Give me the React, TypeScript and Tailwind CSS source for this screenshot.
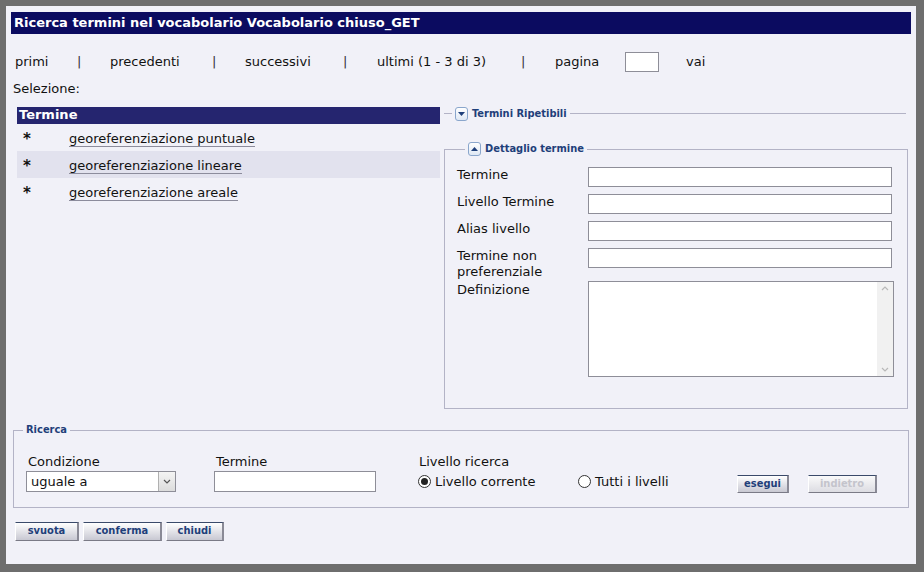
import React from 'react';

const font = { fontFamily: '"DejaVu Sans", Verdana, sans-serif' };
const narrow = { fontFamily: '"DejaVu Sans Condensed", "DejaVu Sans", sans-serif' };

const Legend: React.FC<{ label: string; open?: boolean }> = ({ label, open }) => (
    <legend className="ml-[8px] px-[3px] flex items-center gap-[4px]">
        <span className="w-[13px] h-[14px] rounded-[3px] border border-[#8aa6cc] bg-gradient-to-b from-white to-[#dfe8f4] flex items-center justify-center">
            <svg width="7" height="4" viewBox="0 0 7 4">
                {open ? <path d="M0 4 L3.5 0 L7 4 Z" fill="#1f3f7a" /> : <path d="M0 0 L7 0 L3.5 4 Z" fill="#1f3f7a" />}
            </svg>
        </span>
        <span className="text-[11px] font-bold text-[#1f3f7a]" style={narrow}>{label}</span>
    </legend>
);

const Btn: React.FC<{ label: string; w: string; h?: string; disabled?: boolean }> = ({ label, w, h = 'h-[18px]', disabled }) => (
    <div
        style={narrow}
        className={`${w} ${h} flex items-center justify-center text-[11px] font-bold border-t border-t-[#3a4a6a] border-l border-l-white border-r-2 border-r-[#8a8a96] border-b border-b-[#7a7a86] bg-gradient-to-b ${disabled ? 'text-[#c4c4cc] from-[#fafafa] to-[#dcdce2]' : 'text-[#1f3f7a] from-white to-[#c8c8d2]'}`}
    >
        {label}
    </div>
);

const Radio: React.FC<{ checked?: boolean }> = ({ checked }) => (
    <span className="w-[13px] h-[13px] rounded-full border border-[#333] bg-white flex items-center justify-center">
        {checked && <span className="w-[7px] h-[7px] rounded-full bg-[#222]" />}
    </span>
);

const terms = ['georeferenziazione puntuale', 'georeferenziazione lineare', 'georeferenziazione areale'];

const fields = ['Termine', 'Livello Termine', 'Alias livello'];

export default function App() {
    return (
        <div className="w-[924px] h-[572px] bg-[#6e6e6e] pt-[6px] pl-[6px] overflow-hidden" style={font}>
            <div className="w-[910px] h-[558px] bg-[#f1f1f8] text-[13px] text-[#111] flex flex-col">
                {/* title */}
                <div className="mt-[6px] ml-[5px] w-[900px] h-[22px] bg-[#0b0b60] text-white font-bold text-[13px] flex items-center pl-[3px]">
                    Ricerca termini nel vocabolario Vocabolario chiuso_GET
                </div>

                {/* paging */}
                <div className="mt-[18px] ml-[9px] h-[20px] flex items-center">
                    <span className="w-[62px]">primi</span>
                    <span className="w-[33px] text-[#333]">|</span>
                    <span className="w-[102px]">precedenti</span>
                    <span className="w-[33px] text-[#333]">|</span>
                    <span className="w-[98px]">successivi</span>
                    <span className="w-[34px] text-[#333]">|</span>
                    <span className="w-[144px]">ultimi (1 - 3 di 3)</span>
                    <span className="w-[34px] text-[#333]">|</span>
                    <span className="w-[70px]">pagina</span>
                    <span className="w-[34px] h-[20px] bg-white border border-[#8e8e98]" />
                    <span className="ml-[27px]">vai</span>
                </div>

                <div className="mt-[7px] ml-[7px]">Selezione:</div>

                <div className="mt-[8px] flex">
                    {/* left list */}
                    <div className="ml-[11px] w-[423px]">
                        <div className="h-[17px] bg-[#25256f] text-white font-bold text-[13px] flex items-center pl-[2px]">Termine</div>
                        {terms.map((t, i) => (
                            <div key={t} className={`h-[27px] pt-[4px] flex items-center ${i === 1 ? 'bg-[#e2e2ee]' : ''}`}>
                                <span className="w-[52px] pl-[6px] font-bold text-[15px]">*</span>
                                <span className="border-b border-[#8c8c9c] leading-[15px]">{t}</span>
                            </div>
                        ))}
                    </div>

                    {/* right */}
                    <div className="ml-[4px] w-[462px]">
                        <fieldset className="border-t border-[#b3b3c6] mt-[-1px]">
                            <Legend label="Termini Ripetibili" />
                        </fieldset>
                        <fieldset className="mt-[19px] h-[268px] border border-[#b3b3c6] pl-[12px] pr-[13px]">
                            <Legend label="Dettaglio termine" open />
                            <div className="flex flex-col mt-[9px]">
                                {fields.map((f) => (
                                    <div key={f} className="flex items-start h-[27px]">
                                        <span className="w-[131px] leading-[16px]">{f}</span>
                                        <span className="w-[304px] h-[20px] bg-white border border-[#8e8e98]" />
                                    </div>
                                ))}
                                <div className="flex items-start h-[33px]">
                                    <span className="w-[131px] leading-[16px]">Termine non<br />preferenziale</span>
                                    <span className="w-[304px] h-[20px] bg-white border border-[#8e8e98]" />
                                </div>
                                <div className="flex items-start">
                                    <span className="w-[131px] leading-[16px] pt-[1px]">Definizione</span>
                                    <div className="w-[306px] h-[96px] bg-white border border-[#8e8e98] flex justify-end">
                                        <div className="w-[16px] h-full bg-[#f1f1f1] flex flex-col justify-between items-center py-[4px]">
                                            <svg width="8" height="5" viewBox="0 0 8 5"><path d="M1 4 L4 1 L7 4" stroke="#b8b8b8" strokeWidth="1.2" fill="none" /></svg>
                                            <svg width="8" height="5" viewBox="0 0 8 5"><path d="M1 1 L4 4 L7 1" stroke="#b8b8b8" strokeWidth="1.2" fill="none" /></svg>
                                        </div>
                                    </div>
                                </div>
                            </div>
                        </fieldset>
                    </div>
                </div>

                {/* ricerca */}
                <fieldset className="mt-[13px] ml-[7px] w-[896px] h-[86px] border border-[#b3b3c6]">
                    <legend className="ml-[9px] px-[3px] text-[11px] font-bold text-[#1f3f7a]" style={narrow}>Ricerca</legend>
                    <div className="flex items-end mt-[13px]">
                        <div className="ml-[12px] w-[188px]">
                            <div className="pl-[2px]">Condizione</div>
                            <div className="w-[150px] h-[21px] bg-white border border-[#8e8e98] flex items-center justify-between">
                                <span className="pl-[4px]">uguale a</span>
                                <span className="w-[17px] h-full bg-gradient-to-b from-[#f4f4f4] to-[#dcdcdc] border-l border-[#b0b0b0] flex items-center justify-center">
                                    <svg width="8" height="5" viewBox="0 0 8 5"><path d="M1 1 L4 4 L7 1" stroke="#555" strokeWidth="1.2" fill="none" /></svg>
                                </span>
                            </div>
                        </div>
                        <div className="w-[204px]">
                            <div className="pl-[2px]">Termine</div>
                            <div className="w-[162px] h-[21px] bg-white border border-[#8e8e98]" />
                        </div>
                        <div className="w-[319px]">
                            <div className="pl-[1px]">Livello ricerca</div>
                            <div className="flex items-center h-[21px]">
                                <Radio checked />
                                <span className="ml-[4px] w-[143px]">Livello corrente</span>
                                <Radio />
                                <span className="ml-[4px]">Tutti i livelli</span>
                            </div>
                        </div>
                        <div className="flex gap-[19px] mb-[-1px]">
                            <Btn label="esegui" w="w-[52px]" />
                            <Btn label="indietro" w="w-[69px]" disabled />
                        </div>
                    </div>
                </fieldset>

                <div className="mt-[14px] ml-[9px] flex gap-[4px]">
                    <Btn label="svuota" w="w-[64px]" h="h-[19px]" />
                    <Btn label="conferma" w="w-[79px]" h="h-[19px]" />
                    <Btn label="chiudi" w="w-[58px]" h="h-[19px]" />
                </div>
            </div>
        </div>
    );
}
